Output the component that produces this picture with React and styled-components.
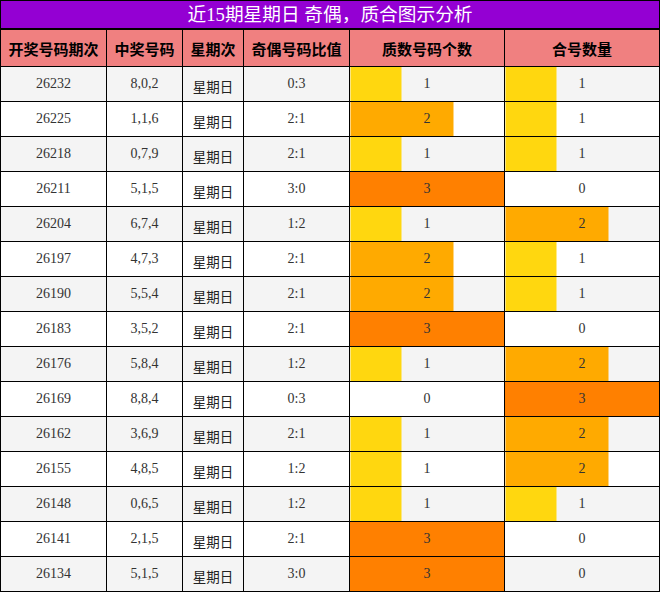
import React from "react";
import styled, { createGlobalStyle } from "styled-components";

const Global = createGlobalStyle`
  html, body { margin: 0; padding: 0; background: #fff; }
  body { font-family: "Liberation Serif", "Noto Sans CJK SC", serif; }
`;

const Table = styled.table`
  width: 660px;
  border-collapse: collapse;
  table-layout: fixed;
  border: 1px solid #000;
`;

const TitleCell = styled.th`
  height: 27px;
  padding: 0;
  background: #9400d3;
  color: #fff;
  font-family: "Liberation Serif", "Noto Sans CJK SC", serif;
  font-size: 18.7px;
  font-weight: normal;
  text-align: center;
  border: 1px solid #000;
  border-bottom: 2px solid #000;
  line-height: 27px;
`;

const HeadCell = styled.th`
  height: 36px;
  padding: 0;
  background: #f08080;
  color: #000;
  font-family: "Noto Sans CJK SC", sans-serif;
  font-size: 15px;
  font-weight: bold;
  text-align: center;
  border: 1px solid #000;
`;

const Row = styled.tr`
  background: ${(p) => (p.$shade ? "#f4f4f4" : "#ffffff")};
`;

const Cell = styled.td`
  height: 34px;
  padding: 0;
  border: 1px solid #000;
  text-align: center;
  vertical-align: middle;
  color: #333;
  font-family: "Liberation Serif", serif;
  font-size: 14px;
`;

const DayCell = styled(Cell)`
  font-family: "Noto Sans CJK SC", sans-serif;
  font-size: 13.5px;
  color: #222;
  padding-top: 3px;
  height: 31px;
`;

const BAR_COLORS = { 1: "#ffd70f", 2: "#ffaa00", 3: "#ff8000" };

const BarCell = styled(Cell)`
  background: ${(p) =>
    p.$n > 0
      ? `linear-gradient(to right, ${BAR_COLORS[p.$n]} 0, ${BAR_COLORS[p.$n]} ${(p.$n / 3) * 100}%, transparent ${(p.$n / 3) * 100}%)`
      : "transparent"};
`;

const rows = [
  ["26232", "8,0,2", "0:3", 1, 1],
  ["26225", "1,1,6", "2:1", 2, 1],
  ["26218", "0,7,9", "2:1", 1, 1],
  ["26211", "5,1,5", "3:0", 3, 0],
  ["26204", "6,7,4", "1:2", 1, 2],
  ["26197", "4,7,3", "2:1", 2, 1],
  ["26190", "5,5,4", "2:1", 2, 1],
  ["26183", "3,5,2", "2:1", 3, 0],
  ["26176", "5,8,4", "1:2", 1, 2],
  ["26169", "8,8,4", "0:3", 0, 3],
  ["26162", "3,6,9", "2:1", 1, 2],
  ["26155", "4,8,5", "1:2", 1, 2],
  ["26148", "0,6,5", "1:2", 1, 1],
  ["26141", "2,1,5", "2:1", 3, 0],
  ["26134", "5,1,5", "3:0", 3, 0],
];

const widths = [106, 76, 61, 106, 155, 155];
const heads = ["开奖号码期次", "中奖号码", "星期次", "奇偶号码比值", "质数号码个数", "合号数量"];

export default function App() {
  return (
    <>
      <Global />
      <Table>
        <colgroup>
          {widths.map((w, i) => (
            <col key={i} style={{ width: w }} />
          ))}
        </colgroup>
        <thead>
          <tr>
            <TitleCell colSpan={6}>近15期星期日 奇偶，质合图示分析</TitleCell>
          </tr>
          <tr>
            {heads.map((h) => (
              <HeadCell key={h}>{h}</HeadCell>
            ))}
          </tr>
        </thead>
        <tbody>
          {rows.map((r, i) => (
            <Row key={r[0]} $shade={i % 2 === 0}>
              <Cell>{r[0]}</Cell>
              <Cell>{r[1]}</Cell>
              <DayCell>星期日</DayCell>
              <Cell>{r[2]}</Cell>
              <BarCell $n={r[3]}>{r[3]}</BarCell>
              <BarCell $n={r[4]}>{r[4]}</BarCell>
            </Row>
          ))}
        </tbody>
      </Table>
    </>
  );
}
